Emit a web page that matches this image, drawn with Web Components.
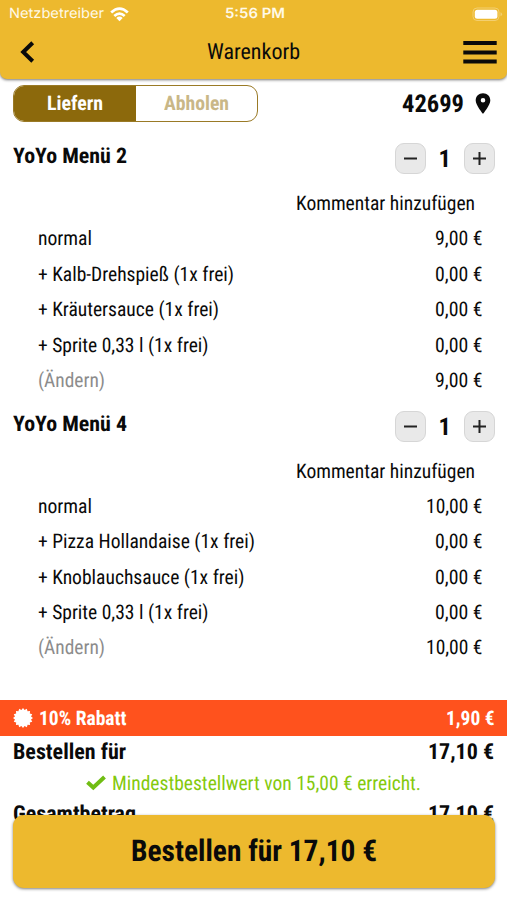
<!DOCTYPE html>
<html lang="de">
<head>
<meta charset="utf-8">
<title>Warenkorb</title>
<style>
html,body{margin:0;height:100%;background:#fff;overflow:hidden}
body{font-family:"Roboto Condensed",Roboto,"Liberation Sans",sans-serif;font-stretch:75%;color:#0a0a0a;text-rendering:geometricPrecision}
</style>
</head>
<body>
<cart-screen></cart-screen>
<script>
const define = (name, html, setup) => customElements.define(name, class extends HTMLElement {
  connectedCallback() {
    if (this.shadowRoot) return;
    const t = document.createElement('template');
    t.innerHTML = html;
    this.attachShadow({mode: 'open'}).appendChild(t.content.cloneNode(true));
    if (setup) setup(this, this.shadowRoot);
  }
});

// One line of text, condensed horizontally to the width given in "w".
define('fit-text', `<style>
:host{display:block;flex:none;white-space:nowrap}
span{display:inline-block;transform-origin:0 50%}
</style><span><slot></slot></span>`, (el, root) => {
  const span = root.querySelector('span'), w = +el.getAttribute('w');
  span.style.transform = `scaleX(${w / span.getBoundingClientRect().width})`;
  el.style.width = w + 'px';
});

define('status-bar', `<style>
:host{display:grid;grid-template-columns:1fr auto 1fr;align-items:center;height:27px;padding:0 7px 0 9px;color:#fff9e8;font:400 14px/28px Inter,sans-serif;font-stretch:100%}
.l{display:flex;align-items:center;gap:6px}.t{font-weight:600}
.r{justify-self:end;display:block;margin-right:-3px}svg{display:block}
</style>
<div class="l"><fit-text w="95">Netzbetreiber</fit-text>
<svg width="19" height="15" viewBox="0 0 19 15" fill="none" stroke="#fff" stroke-width="2.7"><path d="M1.2 5.6Q9.5-2.2 17.8 5.6M4.3 9Q9.5 4.2 14.7 9"/><path d="M6.3 10.9Q9.5 8.1 12.7 10.9L9.5 14.2Z" fill="#fff" stroke="none"/></svg></div>
<fit-text class="t" w="60">5:56 PM</fit-text>
<svg class="r" width="31" height="15" viewBox="0 0 31 15"><rect x="1" y="1" width="26" height="12.5" rx="4" fill="none" stroke="#f3cf70" stroke-width="1"/><rect x="2.8" y="2.8" width="22.6" height="9" rx="2.5" fill="#fff"/><path d="M28.5 5.2v4q1.6-.6 1.6-2t-1.6-2z" fill="#f3cf70"/></svg>`);

define('app-header', `<style>
:host{display:block;height:79px;background:#edb92e;border-radius:0 0 7px 7px;box-shadow:0 1px 3px rgba(0,0,0,.55)}
nav{display:grid;grid-template-columns:1fr auto 1fr;align-items:center;height:50px;padding:0 10px 0 20px;font-size:22px;line-height:50px}
svg{display:block}.m{justify-self:end}
fit-text{margin:2px 5px 0 -5px}
nav{grid-template-rows:50px}
</style>
<status-bar></status-bar>
<nav><svg width="15" height="22" viewBox="0 0 15 22" fill="none" stroke="#0a0a0a" stroke-width="4"><path d="M12.7 1.7 3.2 11l9.5 9.3"/></svg>
<fit-text w="93">Warenkorb</fit-text>
<svg class="m" width="34" height="23" viewBox="0 0 34 23" fill="#0a0a0a"><path d="M.3 0h33.4v4H.3zM.3 9.5h33.4v4H.3zM.3 18.5h33.4v4H.3z"/></svg></nav>`);

define('mode-bar', `<style>
:host{display:flex;justify-content:space-between;align-items:center;height:37px;padding:6px 16px 0 13px}
.seg{box-sizing:border-box;display:grid;grid-template-columns:121.5px 1fr;width:245px;height:37px;border:1.5px solid #9a7a26;border-radius:11px;overflow:hidden;font-size:20px;font-weight:700;line-height:34px}
.seg div{display:flex;justify-content:center}
.on{background:#8c690c;color:#fff}.off{color:#c9b787}
.zip{display:flex;align-items:center;gap:11px;font-size:24.5px;font-weight:700;line-height:36px}svg{display:block}
</style>
<div class="seg"><div class="on"><fit-text w="56">Liefern</fit-text></div><div class="off"><fit-text w="65">Abholen</fit-text></div></div>
<div class="zip"><fit-text w="62">42699</fit-text><svg width="16" height="21" viewBox="0 0 16 21"><path fill="#0a0a0a" fill-rule="evenodd" d="M8 .2C3.8.2.7 3.3.7 7.4.7 12.2 8 20.7 8 20.7s7.3-8.5 7.3-13.3C15.3 3.3 12.2.2 8 .2zM8 5a2.3 2.3 0 1 1 0 4.6 2.3 2.3 0 0 1 0-4.6z"/></svg></div>`);

define('qty-stepper', `<style>
:host{display:flex;align-items:center;font-size:24.5px;font-weight:700;line-height:32px}
.b{box-sizing:border-box;width:31px;height:31px;border:1px solid #d6d6d6;border-radius:9px;background:#e9e9e9;display:grid;place-items:center}
svg{display:block}.n{width:37.5px;height:31px;display:flex;justify-content:center}
</style>
<div class="b"><svg width="15" height="15"><path d="M1 7.5h13" stroke="#222" stroke-width="2"/></svg></div>
<div class="n"><slot></slot></div>
<div class="b"><svg width="15" height="15"><path d="M1 7.5h13M7.5 1v13" stroke="#222" stroke-width="2"/></svg></div>`);

define('price-row', `<style>
:host{display:flex;justify-content:space-between;height:35.4px;line-height:35.4px;padding:0 25px 0 37.5px;font-size:20px}
:host([muted]) ::slotted(:first-child){color:#8c8c8c}
:host([note]){justify-content:flex-end;padding-right:32px}
</style><slot></slot>`);

define('cart-item', `<style>
:host{display:block;height:267.5px}
.h{display:flex;justify-content:space-between;align-items:flex-start;height:43px;padding:13px 12.5px 0 13px}
.t{font-size:21.5px;font-weight:700;line-height:28px}
</style><div class="h"><div class="t"><slot name="title"></slot></div><qty-stepper>1</qty-stepper></div>
<price-row note><fit-text w="179">Kommentar hinzufügen</fit-text></price-row><slot></slot>`);

define('order-summary', `<style>
:host{display:block}
.d{display:flex;align-items:center;height:36px;padding:0 13px;background:#ff521d;color:#fff;font-size:20px;font-weight:700;line-height:36px}
.d svg{margin-right:6px}.d fit-text:last-child{margin-left:auto}
.s{display:flex;justify-content:space-between;height:32px;line-height:34px;padding:0 13px;font-size:22px;font-weight:700}
.g{display:flex;justify-content:center;align-items:center;gap:6px;height:30px;line-height:32px;font-size:20px;color:#84c90d}
svg{display:block}
</style>
<div class="d"><svg width="20" height="20" viewBox="-10 -10 20 20"><path id="seal" fill="#fff"/></svg><fit-text w="87.5">10% Rabatt</fit-text><fit-text w="48.5">1,90 €</fit-text></div>
<div class="s"><fit-text w="113">Bestellen für</fit-text><fit-text w="66">17,10 €</fit-text></div>
<div class="g"><svg width="20" height="16" viewBox="0 0 20 16" fill="none" stroke="#70bd13" stroke-width="4"><path d="M1.5 7.2 7.3 12.5 18.5 2"/></svg><fit-text w="309">Mindestbestellwert von 15,00 € erreicht.</fit-text></div>
<div class="s"><fit-text w="123">Gesamtbetrag</fit-text><fit-text w="66">17,10 €</fit-text></div>`, (el, root) => {
  // Sixteen-pointed discount seal.
  let d = '';
  for (let i = 0; i < 32; i++) {
    const r = i % 2 ? 8.2 : 10, a = i * Math.PI / 16;
    d += (i ? 'L' : 'M') + (r * Math.cos(a)).toFixed(2) + ' ' + (r * Math.sin(a)).toFixed(2);
  }
  root.querySelector('#seal').setAttribute('d', d + 'Z');
});

define('order-button', `<style>
:host{display:flex;align-items:center;justify-content:center;height:73.5px;border-radius:11px;background:#edb92e;box-shadow:0 1px 3px rgba(0,0,0,.5);font-size:30px;font-weight:700;line-height:73px}
</style><slot></slot>`);

define('cart-screen', `<style>
:host{display:flex;flex-direction:column;position:relative;width:507px;height:900px;overflow:hidden;background:#fff}
app-header,mode-bar{flex:none}
main{flex:none;height:570px;padding-top:8px;box-sizing:border-box}
order-summary{margin-top:8px}
order-button{position:absolute;left:13px;right:12.5px;top:814.5px}
</style>
<app-header></app-header><mode-bar></mode-bar>
<main>
<cart-item><fit-text slot="title" w="114">YoYo Menü 2</fit-text>
<price-row><fit-text w="54">normal</fit-text><fit-text w="47.5">9,00 €</fit-text></price-row>
<price-row><fit-text w="196">+ Kalb-Drehspieß (1x frei)</fit-text><fit-text w="47.5">0,00 €</fit-text></price-row>
<price-row><fit-text w="181">+ Kräutersauce (1x frei)</fit-text><fit-text w="47.5">0,00 €</fit-text></price-row>
<price-row><fit-text w="170.5">+ Sprite 0,33 l (1x frei)</fit-text><fit-text w="47.5">0,00 €</fit-text></price-row>
<price-row muted><fit-text w="67">(Ändern)</fit-text><fit-text w="47.5">9,00 €</fit-text></price-row>
</cart-item>
<cart-item><fit-text slot="title" w="114">YoYo Menü 4</fit-text>
<price-row><fit-text w="54">normal</fit-text><fit-text w="56.5">10,00 €</fit-text></price-row>
<price-row><fit-text w="217">+ Pizza Hollandaise (1x frei)</fit-text><fit-text w="47.5">0,00 €</fit-text></price-row>
<price-row><fit-text w="206.5">+ Knoblauchsauce (1x frei)</fit-text><fit-text w="47.5">0,00 €</fit-text></price-row>
<price-row><fit-text w="170.5">+ Sprite 0,33 l (1x frei)</fit-text><fit-text w="47.5">0,00 €</fit-text></price-row>
<price-row muted><fit-text w="67">(Ändern)</fit-text><fit-text w="56.5">10,00 €</fit-text></price-row>
</cart-item>
</main>
<order-summary></order-summary>
<order-button><fit-text w="246">Bestellen für 17,10 €</fit-text></order-button>`);
</script>
</body>
</html>
